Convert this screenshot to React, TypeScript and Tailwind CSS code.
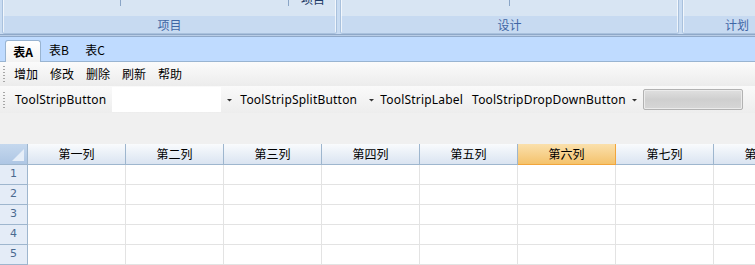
import React from "react";

const cjk = { fontFamily: '"Noto Sans CJK SC", "Noto Sans", sans-serif' };
const ui = { fontFamily: '"Noto Sans", "Noto Sans CJK SC", sans-serif' };

function Grip() {
  return (
    <div className="flex flex-col gap-[2px] ml-[3px] mr-[8px]">
      {Array.from({ length: 6 }).map((_, i) => (
        <div key={i} className="w-[2px] h-[1px] bg-[#a7a7a7]" />
      ))}
    </div>
  );
}

function Arrow() {
  return (
    <svg width="7" height="4" viewBox="0 0 7 4" className="mx-[5px]">
      <path d="M1 1h5L3.5 3.5z" fill="#333" />
    </svg>
  );
}

function Group({ width, label, children }: { width: number; label: string; children?: React.ReactNode }) {
  return (
    <div
      className="relative h-[34px] shrink-0 rounded-b-[3px] border-x border-b border-[#a9c1dd] overflow-hidden flex flex-col"
      style={{ width }}
    >
      <div className="relative h-[16px] bg-[#d8e5f3] border-x border-white/70">{children}</div>
      <div
        className="flex-1 bg-[#c7daf1] flex items-center justify-center text-[12px] text-[#3f66a5] leading-none border-x border-white/70"
        style={cjk}
      >
        {label}
      </div>
    </div>
  );
}

const cols = ["第一列", "第二列", "第三列", "第四列", "第五列", "第六列", "第七列", "第八列"];

export default function App() {
  return (
    <div className="w-[755px] h-[265px] overflow-hidden bg-[#f0f0f0] flex flex-col">
      {/* Ribbon */}
      <div className="h-[34px] bg-[#c9dcf2] flex gap-[3px] pl-[2px] shrink-0">
        <Group width={335} label="项目">
          <div className="absolute left-[116px] top-0 w-px h-[6px] bg-[#8aa5c6]" />
          <div className="absolute left-[284px] top-0 w-px h-[6px] bg-[#8aa5c6]" />
          <div className="absolute left-[297px] top-[-8px] text-[12px] leading-[14px] text-[#1f3b66]" style={cjk}>
            项目
          </div>
        </Group>
        <Group width={339} label="设计">
          <div className="absolute left-[167px] top-0 w-px h-[6px] bg-[#8aa5c6]" />
        </Group>
        <Group width={110} label="计划" />
      </div>
      <div className="h-[3px] shrink-0 bg-[#b9cde6] border-t border-b border-[#8fa8c8]" />
      {/* Tabs */}
      <div className="h-[25px] shrink-0 bg-[#bfdbff] border-b border-[#99b4d1] flex items-end pl-[5px] text-[12px]" style={cjk}>
        <div className="h-[22px] w-[36px] -mb-px rounded-t-[3px] border border-b-0 border-[#99b4d1] bg-gradient-to-b from-[#ffffff] to-[#f3f3f3] flex items-center justify-center font-bold text-black">
          表A
        </div>
        <div className="h-[22px] w-[36px] flex items-center justify-center text-black">表B</div>
        <div className="h-[22px] w-[36px] flex items-center justify-center text-black">表C</div>
      </div>
      {/* Toolstrip 1 */}
      <div className="h-[24px] shrink-0 bg-gradient-to-b from-[#fbfbfb] to-[#ececec] flex items-center text-[12px] text-black" style={cjk}>
        <Grip />
        <span className="ml-[1px]">增加</span>
        <span className="ml-[12px]">修改</span>
        <span className="ml-[12px]">删除</span>
        <span className="ml-[12px]">刷新</span>
        <span className="ml-[12px]">帮助</span>
      </div>
      {/* Toolstrip 2 */}
      <div className="h-[27px] shrink-0 bg-gradient-to-b from-[#fafafa] to-[#ededed] flex items-center text-[12px] text-black tracking-[0.2px]" style={ui}>
        <Grip />
        <span className="ml-[2px]">ToolStripButton</span>
        <div className="ml-[6px] w-[109px] h-[25px] bg-white" />
        <Arrow />
        <span className="ml-[2px]">ToolStripSplitButton</span>
        <span className="ml-[6px]"><Arrow /></span>
        <span className="ml-[0px]">ToolStripLabel</span>
        <span className="ml-[9px]">ToolStripDropDownButton</span>
        <Arrow />
        <div className="w-[100px] h-[21px] rounded-[2px] border border-[#b2b2b2] bg-gradient-to-b from-[#e0e0e0] via-[#cfcfcf] to-[#d6d6d6] shadow-[inset_0_0_0_1px_#ebebeb]" />
      </div>
      {/* spacer */}
      <div className="h-[31px] shrink-0 bg-[#f0f0f0]" />
      {/* Grid */}
      <div className="flex-1 bg-white flex flex-col" style={cjk}>
        <div className="h-[21px] flex shrink-0">
          <div className="w-[28px] shrink-0 bg-gradient-to-b from-[#c5d8ee] to-[#aec6e4] border-r border-b border-[#9eb6ce] relative">
            <svg width="12" height="12" viewBox="0 0 12 12" className="absolute right-[3px] bottom-[3px]">
              <path d="M12 0V12H0z" fill="#e6eef8" />
            </svg>
          </div>
          {cols.map((c, i) => (
            <div
              key={c}
              className={
                i === 5
                  ? "w-[98px] shrink-0 flex items-center justify-center text-[12px] text-black bg-gradient-to-b from-[#fae0ac] to-[#f4c26b] border-r border-b border-[#f1a53c]"
                  : "w-[98px] shrink-0 flex items-center justify-center text-[12px] text-black bg-gradient-to-b from-[#f9fbfd] to-[#dae4f1] border-r border-b border-[#9eb6ce]"
              }
            >
              {c}
            </div>
          ))}
        </div>
        {[1, 2, 3, 4, 5].map((r) => (
          <div key={r} className="h-[20px] flex shrink-0">
            <div className="w-[28px] shrink-0 bg-[#e4ecf7] border-r border-b border-[#9eb6ce] flex items-center justify-center text-[11px] text-[#4a6a90]" style={{ fontFamily: '"DejaVu Sans", sans-serif' }}>
              {r}
            </div>
            {cols.map((c) => (
              <div key={c} className="w-[98px] shrink-0 border-r border-b border-[#e3e3e3]" />
            ))}
          </div>
        ))}
      </div>
    </div>
  );
}
